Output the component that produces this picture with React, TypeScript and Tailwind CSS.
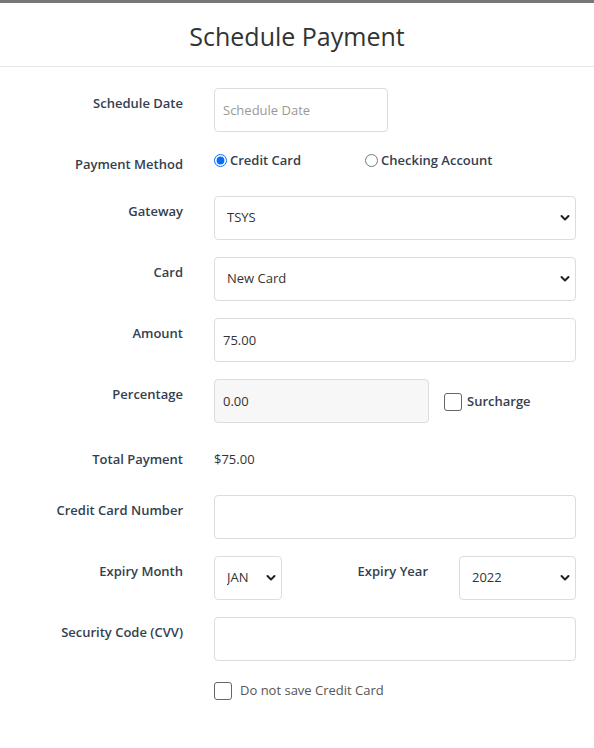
import React from 'react';

const labelCls =
  'w-[183px] shrink-0 text-right pt-[5px] text-[13px] leading-5 font-semibold text-[#34404f]';
const inputCls =
  'h-[44px] rounded-[4px] border border-[#dcdcdc] px-2 text-[13px] text-[#333] outline-none placeholder:text-[#999]';

function Chevron() {
  return (
    <svg
      width="10"
      height="7"
      viewBox="0 0 10 7"
      className="pointer-events-none absolute right-[6px] top-1/2 -translate-y-1/2"
    >
      <path d="M1.5 1.5 L5 5 L8.5 1.5" fill="none" stroke="#222" strokeWidth="2" strokeLinecap="round" strokeLinejoin="round" />
    </svg>
  );
}

function Select({ value, className }: { value: string; className: string }) {
  return (
    <div className={'relative ' + className}>
      <select
        defaultValue={value}
        className="h-[44px] w-full appearance-none rounded-[4px] border border-[#dcdcdc] bg-white pl-3 text-[13px] text-[#333] outline-none"
      >
        <option>{value}</option>
      </select>
      <Chevron />
    </div>
  );
}

function Box() {
  return <span className="inline-block h-[18px] w-[18px] shrink-0 rounded-[3px] border border-[#666] bg-white" />;
}

function Row({ label, children, className = '' }: { label?: string; children: React.ReactNode; className?: string }) {
  return (
    <div className={'flex gap-[31px] ' + className}>
      <div className={labelCls}>{label}</div>
      <div className="flex w-[362px]">{children}</div>
    </div>
  );
}

export default function App() {
  return (
    <div className="min-h-[748px] bg-white" style={{ fontFamily: '"Open Sans", sans-serif' }}>
      <div className="h-[3px] bg-[#777]" />
      <div className="flex h-[64px] items-center justify-center border-b border-[#e8e8e8] pt-[4px]">
        <h1 className="text-[25px] font-medium text-[#333]">Schedule Payment</h1>
      </div>

      <div className="flex flex-col gap-[17px] pt-[21px]">
        <Row label="Schedule Date">
          <input className={inputCls + ' w-[174px] bg-white'} placeholder="Schedule Date" />
        </Row>

        <Row label="Payment Method" className="h-[30px]">
          <div className="flex h-5 items-center pt-[3px] text-[13px] font-semibold text-[#34404f]">
            <label className="flex w-[151px] items-center gap-[3px]">
              <input type="radio" name="pm" defaultChecked className="m-0 h-[13px] w-[13px] accent-[#0a6cf5]" />
              Credit Card
            </label>
            <label className="flex items-center gap-[3px]">
              <input type="radio" name="pm" className="m-0 h-[13px] w-[13px]" />
              Checking Account
            </label>
          </div>
        </Row>

        <Row label="Gateway">
          <Select value="TSYS" className="w-full" />
        </Row>

        <Row label="Card">
          <Select value="New Card" className="w-full" />
        </Row>

        <Row label="Amount">
          <input className={inputCls + ' w-full bg-white'} defaultValue="75.00" />
        </Row>

        <Row label="Percentage">
          <input className={inputCls + ' w-[215px] bg-[#f7f7f7]'} defaultValue="0.00" readOnly />
          <label className="ml-[15px] flex items-center gap-[5px] pt-[2px] text-[13px] font-semibold text-[#34404f]">
            <Box />
            Surcharge
          </label>
        </Row>

        <div className="flex h-[38px] items-center gap-[31px] pt-[2px]">
          <div className="w-[183px] text-right text-[13px] font-semibold text-[#34404f]">Total Payment</div>
          <div className="text-[13px] text-[#333]">$75.00</div>
        </div>

        <Row label="Credit Card Number">
          <input className={inputCls + ' w-full bg-white'} />
        </Row>

        <Row label="Expiry Month">
          <Select value="JAN" className="w-[68px]" />
          <div className="w-[146px] pt-[5px] text-right text-[13px] leading-5 font-semibold text-[#34404f]">Expiry Year</div>
          <Select value="2022" className="ml-[31px] flex-1" />
        </Row>

        <Row label="Security Code (CVV)">
          <input className={inputCls + ' w-full bg-white'} />
        </Row>

        <Row className="h-[24px]">
          <label className="flex items-center gap-[8px] pt-[1px] text-[13px] text-[#555]">
            <Box />
            Do not save Credit Card
          </label>
        </Row>
      </div>
    </div>
  );
}
